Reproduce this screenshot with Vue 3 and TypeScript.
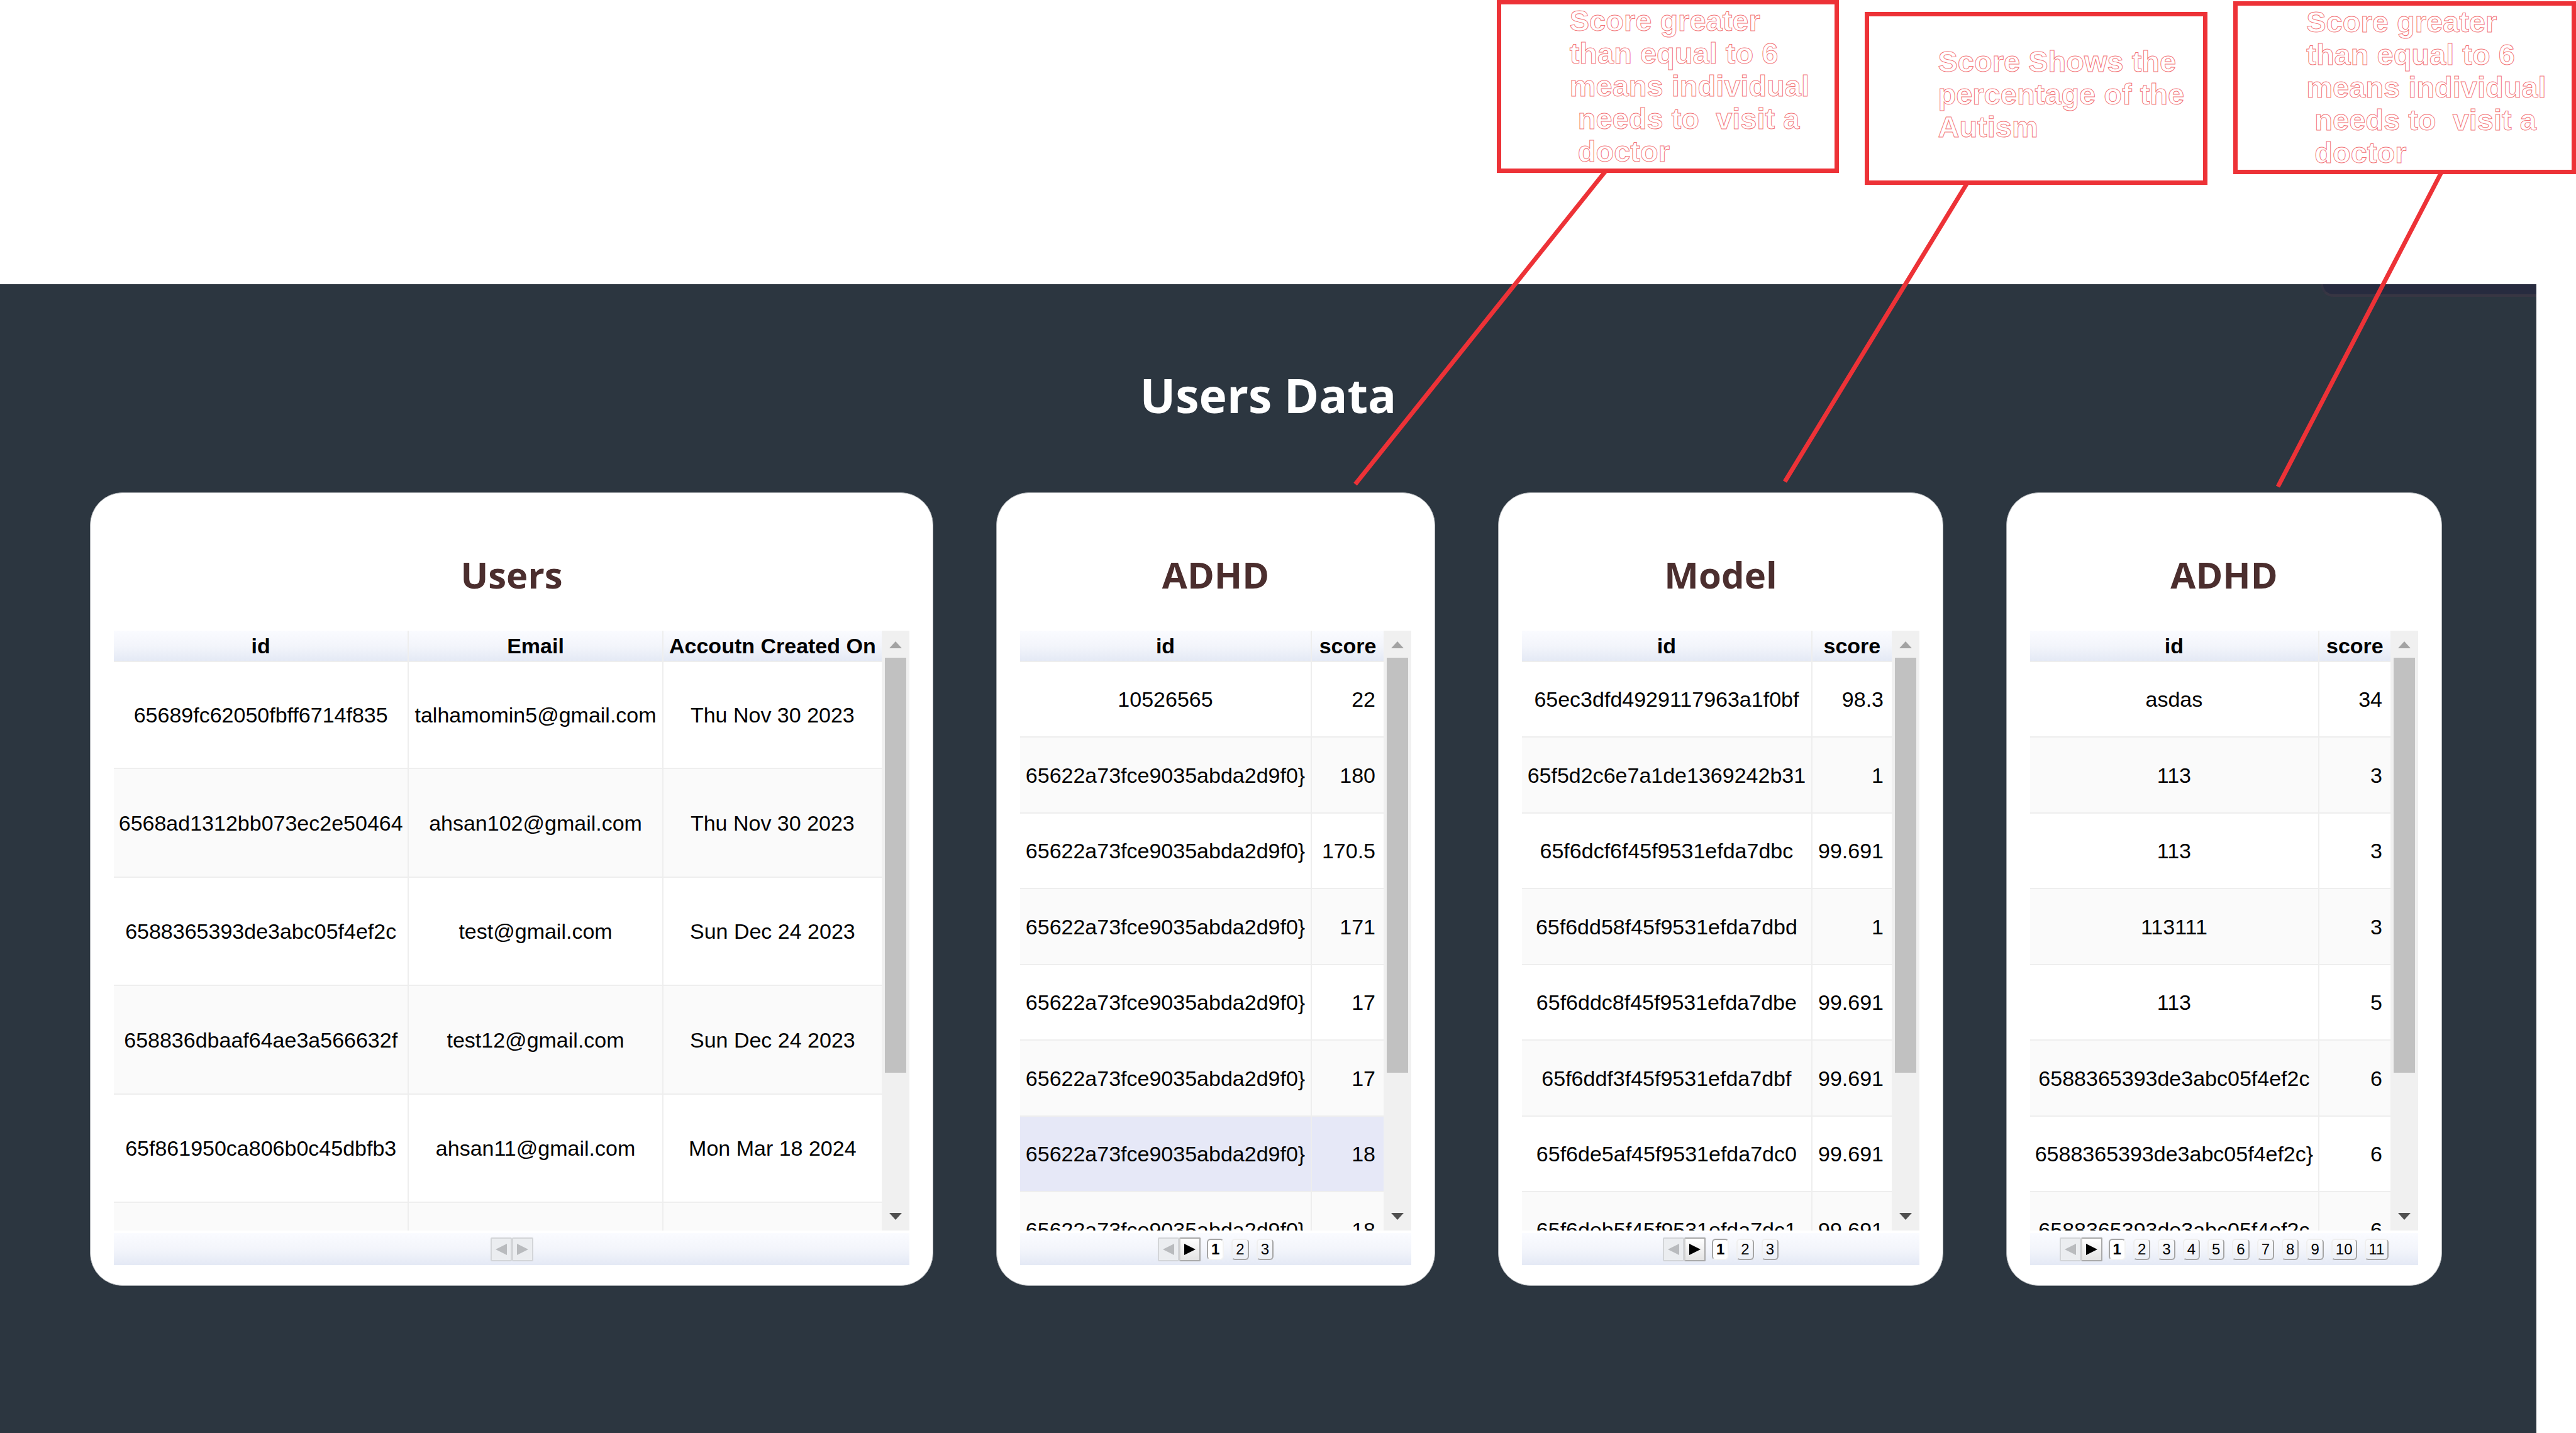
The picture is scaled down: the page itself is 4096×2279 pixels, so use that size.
<script setup lang="ts">
interface Column {
  label: string
  share: number
  numeric?: boolean
}

interface Panel {
  title: string
  columns: Column[]
  rows: string[][]
  pages: number
  tall?: boolean
  selected?: number
}

const greaterThanSix = 'Score greater\nthan equal to 6\nmeans individual\n needs to  visit a\n doctor'
const notes: { text: string; place: string }[] = [
  { text: greaterThanSix, place: 'first' },
  { text: 'Score Shows the\npercentage of the\nAutism', place: 'second' },
  { text: greaterThanSix, place: 'third' },
]

const sampleId = '65622a73fce9035abda2d9f0}'

const panels: Panel[] = [
  {
    title: 'Users',
    tall: true,
    pages: 0,
    columns: [
      { label: 'id', share: 469 },
      { label: 'Email', share: 404 },
      { label: 'Accoutn Created On', share: 347 },
    ],
    rows: [
      ['65689fc62050fbff6714f835', 'talhamomin5@gmail.com', 'Thu Nov 30 2023'],
      ['6568ad1312bb073ec2e50464', 'ahsan102@gmail.com', 'Thu Nov 30 2023'],
      ['6588365393de3abc05f4ef2c', 'test@gmail.com', 'Sun Dec 24 2023'],
      ['658836dbaaf64ae3a566632f', 'test12@gmail.com', 'Sun Dec 24 2023'],
      ['65f861950ca806b0c45dbfb3', 'ahsan11@gmail.com', 'Mon Mar 18 2024'],
      ['', '', ''],
    ],
  },
  {
    title: 'ADHD',
    pages: 3,
    selected: 6,
    columns: [
      { label: 'id', share: 464 },
      { label: 'score', share: 114, numeric: true },
    ],
    rows: [
      ['10526565', '22'],
      [sampleId, '180'],
      [sampleId, '170.5'],
      [sampleId, '171'],
      [sampleId, '17'],
      [sampleId, '17'],
      [sampleId, '18'],
      [sampleId, '18'],
    ],
  },
  {
    title: 'Model',
    pages: 3,
    columns: [
      { label: 'id', share: 461 },
      { label: 'score', share: 126, numeric: true },
    ],
    rows: [
      ['65ec3dfd4929117963a1f0bf', '98.3'],
      ['65f5d2c6e7a1de1369242b31', '1'],
      ['65f6dcf6f45f9531efda7dbc', '99.691'],
      ['65f6dd58f45f9531efda7dbd', '1'],
      ['65f6ddc8f45f9531efda7dbe', '99.691'],
      ['65f6ddf3f45f9531efda7dbf', '99.691'],
      ['65f6de5af45f9531efda7dc0', '99.691'],
      ['65f6deb5f45f9531efda7dc1', '99.691'],
    ],
  },
  {
    title: 'ADHD',
    pages: 11,
    columns: [
      { label: 'id', share: 459 },
      { label: 'score', share: 113, numeric: true },
    ],
    rows: [
      ['asdas', '34'],
      ['113', '3'],
      ['113', '3'],
      ['113111', '3'],
      ['113', '5'],
      ['6588365393de3abc05f4ef2c', '6'],
      ['6588365393de3abc05f4ef2c}', '6'],
      ['6588365393de3abc05f4ef2c', '6'],
    ],
  },
]

function columnWidth(panel: Panel, column: Column): string {
  const total = panel.columns.reduce((sum, c) => sum + c.share, 0)
  return `${(column.share / total) * 100}%`
}
</script>

<template>
  <div class="page">
    <header class="notes">
      <p v-for="note in notes" :key="note.place" class="note" :class="note.place">{{ note.text }}</p>
    </header>

    <main class="dashboard">
      <div class="corner-tab"></div>
      <h1>Users Data</h1>
      <div class="cards">
        <section v-for="(panel, p) in panels" :key="p" class="card">
          <h2>{{ panel.title }}</h2>
          <div class="viewport">
            <table :class="{ tall: panel.tall }" :aria-label="panel.title">
              <colgroup>
                <col v-for="column in panel.columns" :key="column.label" :style="{ width: columnWidth(panel, column) }" />
              </colgroup>
              <thead>
                <tr>
                  <th v-for="column in panel.columns" :key="column.label" scope="col">{{ column.label }}</th>
                </tr>
              </thead>
              <tbody>
                <tr v-for="(row, r) in panel.rows" :key="r" :class="{ selected: panel.selected === r }">
                  <td v-for="(cell, c) in row" :key="c" :class="{ numeric: panel.columns[c].numeric }">{{ cell }}</td>
                </tr>
              </tbody>
            </table>
            <div class="scrollbar" aria-hidden="true">
              <svg class="up" viewBox="0 0 20 11"><path d="M10 0 20 11H0Z" /></svg>
              <div class="thumb"></div>
              <svg class="down" viewBox="0 0 20 11"><path d="M0 0H20L10 11Z" /></svg>
            </div>
          </div>
          <nav class="pager" :aria-label="`${panel.title} pages`">
            <div class="arrows">
              <button type="button" class="arrow" disabled aria-label="Previous page">
                <svg viewBox="0 0 18 18"><path d="M18 0V18L0 9Z" /></svg>
              </button>
              <button type="button" class="arrow" :disabled="panel.pages === 0" aria-label="Next page">
                <svg viewBox="0 0 18 18"><path d="M0 0 18 9 0 18Z" /></svg>
              </button>
            </div>
            <div v-if="panel.pages" class="numbers">
              <button v-for="n in panel.pages" :key="n" type="button" class="number" :class="{ current: n === 1 }">{{ n }}</button>
            </div>
          </nav>
        </section>
      </div>
    </main>

    <svg class="connectors" viewBox="0 0 4096 780" aria-hidden="true">
      <path d="M2553 272 2155 770M3128 291 2838 766M3882 274 3622 774" />
    </svg>
  </div>
</template>

<style>
body {
  margin: 0;
  background: #fff;
}
</style>

<style scoped>
.page {
  position: relative;
  display: flex;
  flex-direction: column;
  min-height: 100vh;
  overflow: hidden;
  font-family: "Liberation Sans", Arial, sans-serif;
  color: #000;
}

.notes {
  display: flex;
  justify-content: flex-end;
  align-items: flex-start;
  gap: 41px;
  height: 452px;
}

.note {
  box-sizing: border-box;
  flex: 0 0 13.3%;
  height: 275px;
  margin: 0;
  padding-left: 109px;
  border: 7px solid #ed3237;
  font-size: 47px;
  line-height: 52px;
  font-weight: 700;
  white-space: pre;
  color: #fff;
  -webkit-text-stroke: 1px rgba(237, 50, 55, 0.7);
}

.note.second {
  margin-top: 19px;
  padding-top: 46px;
}

.note.third {
  margin-top: 2px;
}

.connectors {
  position: absolute;
  top: 0;
  left: 0;
  width: 100%;
  pointer-events: none;
}

.connectors path {
  fill: none;
  stroke: #ed3237;
  stroke-width: 7;
}

.dashboard {
  flex: 1;
  display: flex;
  flex-direction: column;
  margin-right: 63px;
  background: #2c3640;
}

.corner-tab {
  box-sizing: border-box;
  align-self: flex-end;
  width: 343px;
  height: 20px;
  border-left: 4px solid #333443;
  border-bottom: 4px solid #383643;
  border-bottom-left-radius: 20px;
  background: #272b3f;
}

h1,
h2 {
  font-family: "Open Sans", "Noto Sans", sans-serif;
  font-weight: 700;
  text-align: center;
}

h1 {
  margin: 106px 0 105px;
  font-size: 75px;
  line-height: 100px;
  color: #fff;
}

.cards {
  display: grid;
  grid-template-columns: 1341fr 698fr 708fr 693fr;
  align-items: start;
  gap: 100px;
  padding: 0 150px 100px 143px;
}

.card {
  box-sizing: border-box;
  min-width: 0;
  padding: 90px 37px 32px;
  border: 1px solid #a9adb1;
  border-radius: 52px;
  background: #fff;
}

h2 {
  margin: 0 0 49px;
  font-size: 58px;
  line-height: 80px;
  color: #4b2e2e;
}

.viewport {
  display: flex;
  align-items: flex-start;
  height: 954px;
  overflow: hidden;
}

table {
  flex: 1;
  min-width: 0;
  table-layout: fixed;
  border-collapse: separate;
  border-spacing: 0;
  font-size: 34px;
  line-height: 38px;
  white-space: nowrap;
}

th,
td {
  box-sizing: border-box;
  padding: 0;
  border-right: 2px solid #eee;
  border-bottom: 2px solid #eee;
  text-align: center;
  vertical-align: middle;
}

th:last-child,
td:last-child {
  border-right: 0;
}

th {
  height: 50px;
  background: linear-gradient(#fafbff, #f3f5fb 50%, #e4e9f5);
}

td {
  height: 120px;
}

tr:nth-child(even) td {
  height: 121px;
  background: #fafafa;
}

.tall td {
  height: 172px;
}

.tall tr:first-child td {
  height: 170px;
}

.tall tr:nth-child(even) td {
  height: 173px;
}

tr.selected td {
  background: #e6e8f7;
}

.numeric {
  padding-right: 13px;
  text-align: right;
}

.scrollbar {
  box-sizing: border-box;
  display: flex;
  flex-direction: column;
  align-items: center;
  flex: 0 0 44px;
  height: 100%;
  padding: 17px 0;
  background: #f0f0f0;
}

.scrollbar svg {
  width: 20px;
  height: 11px;
}

.up {
  fill: #a3a3a3;
}

.down {
  margin-top: auto;
  fill: #505050;
}

.thumb {
  width: 34px;
  height: 660px;
  margin-top: 15px;
  background: #c1c1c1;
}

.pager {
  display: flex;
  justify-content: center;
  align-items: center;
  gap: 10px;
  height: 51px;
  margin-top: 4px;
  background: linear-gradient(#fafbff, #f3f5fb 50%, #e4e9f5);
}

.arrows {
  display: flex;
}

.numbers {
  display: flex;
  gap: 12px;
}

button {
  box-sizing: border-box;
  display: flex;
  align-items: center;
  justify-content: center;
  margin: 0;
  padding: 0;
  font-family: inherit;
  color: #000;
}

.arrow {
  width: 34px;
  height: 38px;
  border: 2px solid #a9a9a9;
  border-left-color: #d0d0d0;
  border-radius: 2px;
  background: linear-gradient(#fff, #e4e4e4);
}

.arrow:disabled {
  border-color: #d3d5d8;
  background: #ebedf0;
}

.arrow svg {
  width: 18px;
  height: 18px;
  fill: #000;
}

.arrow:disabled svg {
  fill: #b9bbbe;
}

.number {
  min-width: 27px;
  height: 34px;
  padding: 0 5px;
  border: 2px solid #efefef;
  border-right-color: #a5a5a5;
  border-bottom-color: #a5a5a5;
  border-radius: 6px;
  background: linear-gradient(#fbfbfd, #eceff6);
  font-size: 24px;
  line-height: 28px;
}

.number.current {
  border-color: #a5a5a5 #f2f2f2 #f2f2f2 #a5a5a5;
  background: #fff;
  font-weight: 700;
}
</style>
